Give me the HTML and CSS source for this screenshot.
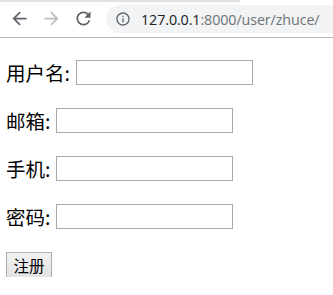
FILE: index.html
```html
<!DOCTYPE html>
<html lang="zh-CN">
<head>
<meta charset="utf-8">
<title>注册</title>
<link rel="stylesheet" href="styles.css">
</head>
<body>
<div class="toolbar">
  <div class="tabline"></div>
  <div class="nav">
    <svg class="nav-icon back" viewBox="0 0 24 24" width="21" height="21"><path d="M20 11H7.83l5.59-5.59L12 4l-8 8 8 8 1.41-1.41L7.83 13H20v-2z"/></svg>
    <svg class="nav-icon fwd" viewBox="0 0 24 24" width="21" height="21"><path d="M4 11h12.17l-5.59-5.59L12 4l8 8-8 8-1.41-1.41L16.170 13H4v-2z"/></svg>
    <svg class="nav-icon reload" viewBox="0 0 24 24" width="21" height="21"><path d="M17.65 6.35A7.958 7.958 0 0012 4c-4.420 0-7.990 3.580-7.990 8s3.570 8 7.990 8c3.730 0 6.840-2.550 7.730-6h-2.080A5.990 5.990 0 0112 18c-3.310 0-6-2.690-6-6s2.690-6 6-6c1.660 0 3.140.690 4.220 1.780L13 11h7V4l-2.350 2.350z"/></svg>
    <div class="omnibox">
      <svg class="info" viewBox="0 0 24 24" width="16" height="16"><path d="M11 7h2v2h-2zm0 4h2v6h-2zm1-9C6.48 2 2 6.48 2 12s4.48 10 10 10 10-4.48 10-10S17.52 2 12 2zm0 18c-4.41 0-8-3.59-8-8s3.59-8 8-8 8 3.59 8 8-3.59 8-8 8z"/></svg>
      <span class="url"><span class="host">127.0.0.1</span><span class="path">:8000/user/zhuce/</span></span>
    </div>
  </div>
</div>
<form class="form">
  <div class="row"><label class="label">用户名:</label><input class="field" type="text"></div>
  <div class="row"><label class="label">邮箱:</label><input class="field" type="text"></div>
  <div class="row"><label class="label">手机:</label><input class="field" type="text"></div>
  <div class="row"><label class="label">密码:</label><input class="field" type="password"></div>
  <div class="row"><button class="submit" type="button">注册</button></div>
</form>
</body>
</html>
```
FILE: styles.css
```css
html, body {
  margin: 0;
  padding: 0;
  background: #fff;
}
body {
  font-family: "Noto Sans CJK SC", "Noto Sans", sans-serif;
  color: #000;
}
.toolbar {
  height: 37px;
  border-bottom: 1px solid #b8b8b8;
  background: #fff;
  position: relative;
  overflow: hidden;
}
.tabline {
  position: absolute;
  left: 0;
  top: 0;
  width: 240px;
  height: 2px;
  background: #dee1e6;
}
.nav {
  display: flex;
  align-items: center;
  height: 37px;
  padding-left: 9px;
}
.nav-icon {
  fill: #5f6368;
  flex: none;
}
.nav-icon.back { margin-right: 11px; }
.nav-icon.fwd { fill: #babcbe; margin-right: 11px; }
.nav-icon.reload { margin-right: 12px; }
.omnibox {
  flex: none;
  width: 260px;
  height: 28px;
  margin-top: 1px;
  border-radius: 14px;
  background: #f1f3f4;
  display: flex;
  align-items: center;
  padding-left: 9px;
}
.info {
  fill: #5f6368;
  flex: none;
  margin-right: 10px;
}
.url {
  font-family: "Open Sans", "Liberation Sans", sans-serif;
  font-size: 14.3px;
  white-space: nowrap;
  letter-spacing: -0.1px;
}
.host { color: #202124; }
.path { color: #6f7377; }
.form {
  display: flex;
  flex-direction: column;
  gap: 23px;
  padding: 22px 0 0 6px;
}
.row {
  display: flex;
  align-items: center;
  height: 25px;
}
.label {
  font-size: 19.5px;
  line-height: 25px;
  margin-right: 6px;
}
.field {
  box-sizing: border-box;
  width: 177px;
  height: 25px;
  border: 1px solid #a9a9a9;
  padding: 1px 2px;
  margin: 0;
  background: #fff;
  font-size: 14px;
}
.submit {
  box-sizing: border-box;
  width: 46px;
  height: 26px;
  margin: 0;
  padding: 0;
  border: 1px solid #adadad;
  border-radius: 0;
  background: linear-gradient(#f2f2f2, #e3e3e3);
  font-family: "Noto Sans CJK SC", sans-serif;
  font-size: 15.5px;
  line-height: 24px;
  color: #000;
}
```
